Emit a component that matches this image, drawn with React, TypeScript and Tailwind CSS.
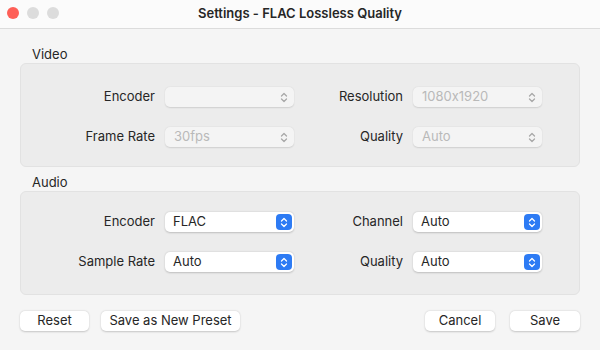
import React from "react";

interface SelectProps {
  value: string;
  disabled?: boolean;
}

const Stepper = ({ color }: { color: string }) => (
  <svg width="8" height="11" viewBox="0 0 8 11" fill="none">
    <path d="M1.5 4 L4 1.5 L6.5 4" stroke={color} strokeWidth="1.3" strokeLinecap="round" strokeLinejoin="round" />
    <path d="M1.5 7 L4 9.5 L6.5 7" stroke={color} strokeWidth="1.3" strokeLinecap="round" strokeLinejoin="round" />
  </svg>
);

const Select = ({ value, disabled }: SelectProps) => {
  if (disabled) {
    return (
      <div className="flex h-[20px] w-[129px] items-center justify-between rounded-[5px] bg-[#f4f4f4] pl-[9px] pr-[6px] text-[13px] text-[#b9b9b9] shadow-[0_0.5px_1.5px_rgba(0,0,0,0.12)]">
        <span>{value}</span>
        <Stepper color="#a8a8a8" />
      </div>
    );
  }
  return (
    <div className="flex h-[20px] w-[129px] items-center justify-between rounded-[5px] bg-white pl-[8px] pr-[2px] text-[13px] text-[#262626] shadow-[0_0.5px_2px_rgba(0,0,0,0.2)]">
      <span>{value}</span>
      <div className="flex h-[16px] w-[16px] items-center justify-center rounded-[4px] bg-[#2d7bf4]">
        <Stepper color="#ffffff" />
      </div>
    </div>
  );
};

interface RowProps {
  left: string;
  leftValue: string;
  right: string;
  rightValue: string;
  disabled?: boolean;
}

const Row = ({ left, leftValue, right, rightValue, disabled }: RowProps) => (
  <div className="flex items-center">
    <div className="w-[144px] pr-[10px] text-right text-[13px] text-[#262626]">{left}</div>
    <Select value={leftValue} disabled={disabled} />
    <div className="w-[119px] pr-[10px] text-right text-[13px] text-[#262626]">{right}</div>
    <Select value={rightValue} disabled={disabled} />
  </div>
);

const Section = ({ title, top, children }: { title: string; top: string; children: React.ReactNode }) => (
  <div className="flex flex-col">
    <div className="h-[18px] pl-[12px] text-[13px] leading-[18px] text-[#262626]">{title}</div>
    <div className={`flex h-[104px] flex-col gap-[20px] rounded-[6px] border border-[#e2e2e2] bg-[#ececec] ${top}`}>
      {children}
    </div>
  </div>
);

const Button = ({ label, width }: { label: string; width: string }) => (
  <button
    className={`h-[20px] ${width} rounded-[5px] bg-white text-[13px] text-[#262626] shadow-[0_0.5px_2px_rgba(0,0,0,0.2)]`}
  >
    {label}
  </button>
);

const App = () => {
  return (
    <div
      className="flex h-[350px] w-[600px] flex-col overflow-hidden bg-[#f5f5f5] [font-feature-settings:'calt'_0]"
      style={{ fontFamily: "Inter, 'Liberation Sans', sans-serif" }}
    >
      <div className="relative flex h-[29px] items-center justify-center border-b border-[#dcdcdc] bg-[#fbfbfb]">
        <div className="absolute left-[7px] top-[7px] flex gap-[8px]">
          <span className="h-[12px] w-[12px] rounded-full bg-[#fe5f57]" />
          <span className="h-[12px] w-[12px] rounded-full bg-[#dcdcdc]" />
          <span className="h-[12px] w-[12px] rounded-full bg-[#dcdcdc]" />
        </div>
        <span className="text-[13px] font-semibold text-[#262626]">Settings - FLAC Lossless Quality</span>
      </div>

      <div className="flex flex-col gap-[6px] px-[20px] pt-[16px]">
        <Section title="Video" top="pt-[23px]">
          <Row left="Encoder" leftValue="" right="Resolution" rightValue="1080x1920" disabled />
          <Row left="Frame Rate" leftValue="30fps" right="Quality" rightValue="Auto" disabled />
        </Section>
        <Section title="Audio" top="pt-[20px]">
          <Row left="Encoder" leftValue="FLAC" right="Channel" rightValue="Auto" />
          <Row left="Sample Rate" leftValue="Auto" right="Quality" rightValue="Auto" />
        </Section>
      </div>

      <div className="flex items-center px-[20px] pt-[16px]">
        <Button label="Reset" width="w-[69px]" />
        <div className="w-[12px]" />
        <Button label="Save as New Preset" width="w-[139px]" />
        <div className="flex-1" />
        <Button label="Cancel" width="w-[70px]" />
        <div className="w-[15px]" />
        <Button label="Save" width="w-[70px]" />
      </div>
    </div>
  );
};

export default App;
